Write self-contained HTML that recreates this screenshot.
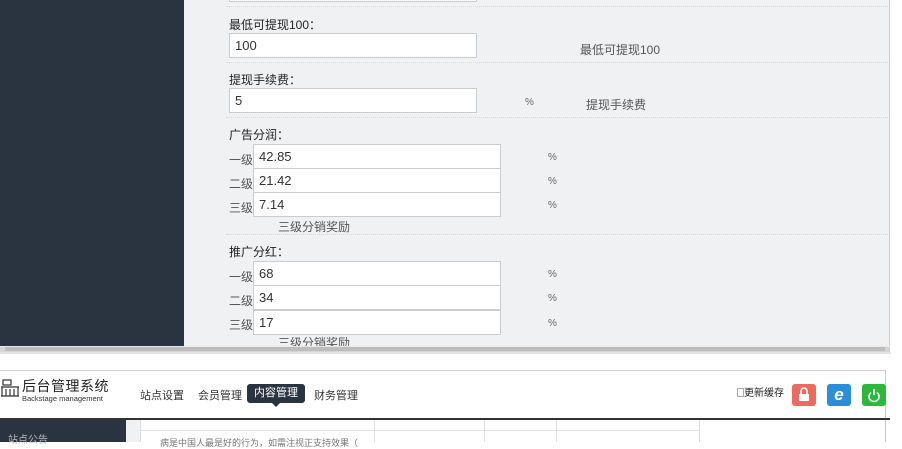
<!DOCTYPE html>
<html><head><meta charset="utf-8"><style>
*{margin:0;padding:0;box-sizing:border-box}
body{width:902px;height:442px;overflow:hidden;background:#fff;font-family:"Liberation Sans","Noto Sans CJK SC",sans-serif;font-size:12px;color:#333;position:relative}
.abs{position:absolute}
.side{left:0;top:0;width:184px;height:346px;background:#2a3340}
.main{left:184px;top:0;width:706px;height:346px;background:#f0f1f3;border-right:1px solid #ccc}
.in{position:absolute;background:#fff;border:1px solid #ccc;height:25px;line-height:23px;padding-left:5px;font-size:13px;color:#333}
.lbl{position:absolute;font-size:12px;color:#222}
.dot{position:absolute;left:226px;width:664px;border-top:1px dotted #d8d8d8}
.pct{position:absolute;font-size:10px;color:#666}
.lv{position:absolute;left:229px;font-size:12px;color:#555}
</style></head><body>
<div class="abs side"></div>
<div class="abs main"></div>
<div class="in" style="left:229px;top:-12px;width:248px;height:14px"></div>
<div class="dot" style="top:6px"></div>
<div class="lbl" style="left:229px;top:16px">最低可提现100：</div>
<div class="in" style="left:229px;top:33px;width:248px">100</div>
<div class="lbl" style="left:580px;top:41px;color:#555">最低可提现100</div>
<div class="dot" style="top:62px"></div>
<div class="lbl" style="left:229px;top:71px">提现手续费：</div>
<div class="in" style="left:229px;top:88px;width:248px">5</div>
<div class="pct" style="left:525px;top:97px">%</div>
<div class="lbl" style="left:586px;top:96px;color:#555">提现手续费</div>
<div class="dot" style="top:117px"></div>
<div class="lbl" style="left:229px;top:126px">广告分润：</div>
<div class="lv" style="top:151px">一级</div><div class="in" style="left:253px;top:144px;width:248px">42.85</div><div class="pct" style="left:548px;top:152px">%</div>
<div class="lv" style="top:175px">二级</div><div class="in" style="left:253px;top:168px;width:248px">21.42</div><div class="pct" style="left:548px;top:176px">%</div>
<div class="lv" style="top:199px">三级</div><div class="in" style="left:253px;top:192px;width:248px">7.14</div><div class="pct" style="left:548px;top:200px">%</div>
<div class="lbl" style="left:278px;top:218px;color:#555">三级分销奖励</div>
<div class="dot" style="top:234px"></div>
<div class="lbl" style="left:229px;top:243px">推广分红：</div>
<div class="lv" style="top:268px">一级</div><div class="in" style="left:253px;top:261px;width:248px">68</div><div class="pct" style="left:548px;top:269px">%</div>
<div class="lv" style="top:292px">二级</div><div class="in" style="left:253px;top:285px;width:248px">34</div><div class="pct" style="left:548px;top:293px">%</div>
<div class="lv" style="top:316px">三级</div><div class="in" style="left:253px;top:310px;width:248px">17</div><div class="pct" style="left:548px;top:318px">%</div>
<div class="lbl" style="left:278px;top:334px;color:#555">三级分销奖励</div>
<div class="abs" style="left:0;top:346px;width:890px;height:6px;background:#d6d6d6;border-top:1px solid #e8e8e8"></div>
<div class="abs" style="left:5px;top:347px;width:880px;height:4px;background:#bdbdbd"></div>
<div class="abs" style="left:0;top:352px;width:891px;height:2px;background:#e4e4e4"></div>
<div class="abs" style="left:0;top:370px;width:886px;height:72px;border-top:1px solid #d0d0d0;border-right:1px solid #ccc;background:#fff"></div>
<svg class="abs" style="left:0;top:379px" width="20" height="18" viewBox="0 0 20 18"><g fill="none" stroke="#333" stroke-width="1.2"><rect x="3" y="1" width="8" height="5"/><path d="M1 8h18M2 8v9M6 10v7M10 10v7M14 10v7M18 8v9M1 17h18"/></g></svg>
<div class="abs" style="left:22px;top:376px;font-size:14px;color:#222;letter-spacing:0.5px">后台管理系统</div>
<div class="abs" style="left:22px;top:394px;font-size:7.5px;color:#333">Backstage management</div>
<div class="abs" style="left:140px;top:387px;font-size:11px;color:#333">站点设置</div>
<div class="abs" style="left:198px;top:387px;font-size:11px;color:#333">会员管理</div>
<div class="abs" style="left:247px;top:384px;width:58px;height:19px;background:#2a3340;border-radius:3px;color:#fff;font-size:11px;line-height:19px;text-align:center">内容管理</div>
<div class="abs" style="left:272px;top:403px;border:4px solid transparent;border-top-color:#2a3340;border-bottom:0"></div>
<div class="abs" style="left:314px;top:387px;font-size:11px;color:#333">财务管理</div>
<div class="abs" style="left:737px;top:384px;font-size:10px;color:#222"><span style="display:inline-block;width:7px;height:9px;border:1px solid #aaa;vertical-align:-1px"></span>更新缓存</div>
<div class="abs" style="left:792px;top:384px;width:24px;height:22px;background:#ec6a5e;border-radius:3px"><svg width="24" height="22"><path d="M9 10V7a3 3 0 0 1 6 0v3" fill="none" stroke="#fff" stroke-width="1.6"/><rect x="7" y="10" width="10" height="7" fill="#fff"/></svg></div>
<div class="abs" style="left:827px;top:384px;width:24px;height:22px;background:#2a8fd8;border-radius:3px;color:#fff;font:bold italic 17px 'Liberation Sans',sans-serif;text-align:center;line-height:22px">e</div>
<div class="abs" style="left:862px;top:384px;width:24px;height:22px;background:#2db83d;border-radius:3px"><svg width="24" height="22"><path d="M9 8.5a5 5 0 1 0 6 0" fill="none" stroke="#fff" stroke-width="1.6"/><path d="M12 5v6" stroke="#fff" stroke-width="1.6"/></svg></div>
<div class="abs" style="left:0;top:418px;width:890px;height:2px;background:#333"></div>
<div class="abs" style="left:0;top:420px;width:126px;height:22px;background:#2a3340"></div>
<div class="abs" style="left:8px;top:431px;font-size:10px;color:#bbb">站点公告</div>
<div class="abs" style="left:126px;top:420px;width:14px;height:22px;background:#f0f1f3"></div>
<div class="abs" style="left:140px;top:420px;width:560px;height:22px;border-left:1px solid #ddd;border-right:1px solid #ddd"></div>
<div class="abs" style="left:140px;top:430px;width:560px;border-top:1px solid #e2e2e2"></div>
<div class="abs" style="left:374px;top:420px;height:22px;border-left:1px solid #e2e2e2"></div>
<div class="abs" style="left:484px;top:420px;height:22px;border-left:1px solid #e2e2e2"></div>
<div class="abs" style="left:556px;top:420px;height:22px;border-left:1px solid #e2e2e2"></div>
<div class="abs" style="left:160px;top:436px;font-size:9px;color:#777">病是中国人最是好的行为，如需注视正支持效果（</div>
</body></html>
